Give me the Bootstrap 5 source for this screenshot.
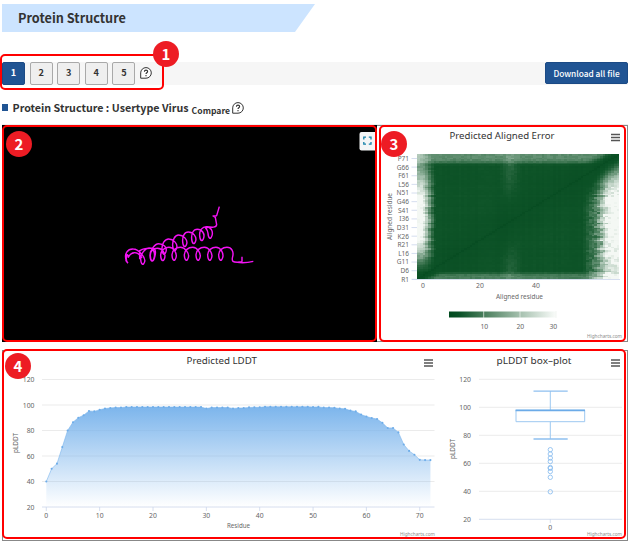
<!DOCTYPE html>
<html lang="en">
<head>
<meta charset="utf-8">
<title>Protein Structure</title>
<link href="https://cdn.jsdelivr.net/npm/bootstrap@5.3.0/dist/css/bootstrap.min.css" rel="stylesheet">
<style>
body{width:632px;height:543px;overflow:hidden;background:#fff;color:#333;font-family:"Noto Sans CJK KR","Noto Sans",sans-serif;line-height:1}
.page{width:632px;height:543px;padding:4px 4px 0 2px}
.ribbon{width:313px;height:28px;padding-left:16px;background:#cce4ff;clip-path:polygon(0 0,100% 0,293px 100%,0 100%);font-size:12.7px;font-weight:700}
.toolbar{height:23px;margin-top:29.5px;background:#f6f6f6}
.toolbar .btn{font-size:9.2px;font-weight:700;line-height:1;padding:0;border-radius:2px}
.num{width:23px;height:23px;background:#efefef;border:1px solid #a9a9a9;color:#333}
.num.active,.dl{background:#205493!important;border:1px solid #1b4a85!important;color:#fff!important}
.toolbar .dl{width:83px;height:22px;font-size:8.3px;font-weight:500}
.sub-title{height:18px;margin-top:15px;font-size:10.7px;font-weight:700}
.bullet{width:6px;height:7px;background:#205493;margin-right:4.5px;margin-bottom:3px}
.cmp{font-size:8.6px;margin:3px 2px 0 3px}
.sub-title svg{margin-bottom:2px}
.rule{height:1px;background:#eee;margin-top:6px}
.viewer{width:375px;height:217px;background:#000}
.panel{border:1px solid #888;background:#fff}
.pae{width:251px;height:217px;border-left:0}
.bottom{width:626px;height:191px;margin-top:8px}
svg{display:block}
.chart text{font-family:"Noto Sans",sans-serif;fill:#666;font-size:6.8px}
.chart .ttl{fill:#333;font-size:9.8px}
.chart .cr{fill:#8d8d8d;font-size:5.4px}
.frame{position:absolute;border:2px solid #f00;border-radius:5px}
.f1{left:0;top:54px;width:164px;height:36px}
.f2{left:2px;top:125px;width:375px;height:217px}
.f3{left:379px;top:125px;width:247px;height:217px}
.f4{left:2px;top:349px;width:624px;height:190px}
.dot{position:absolute;width:26px;height:26px;background:#ed1c24;color:#fff;font-size:15px;font-weight:700;padding-bottom:1px}
.d1{left:153px;top:41px}.d2{left:6px;top:131px}.d3{left:381px;top:131px}.d4{left:5px;top:353px}
</style>
<script src="https://cdn.jsdelivr.net/npm/bootstrap@5.3.0/dist/js/bootstrap.bundle.min.js"></script>
</head>
<body>
<main class="page position-relative">
  <div class="ribbon d-flex align-items-center">Protein Structure</div>
  <div class="toolbar d-flex align-items-center">
    <div class="d-flex align-items-center" style="gap:4.6px">
      <button class="btn num active">1</button><button class="btn num">2</button><button class="btn num">3</button><button class="btn num">4</button><button class="btn num">5</button>
      <svg width="12" height="12" viewBox="0 0 12 12"><path d="M.7 11.2V5.9A5.3 5.3 0 1 1 6 11.2Z" fill="#fff" stroke="#333"/><path d="M4.4 4.7C4.4 2.6 7.7 2.7 7.6 4.6C7.5 5.8 6 5.7 6 7.1M6 8.1V9.2" fill="none" stroke="#333" stroke-width="1.1"/></svg>
    </div>
    <button class="btn dl ms-auto">Download all file</button>
  </div>
  <div class="sub-title d-flex align-items-center"><span class="bullet"></span><span>Protein Structure : Usertype Virus</span><span class="cmp">Compare</span>
    <svg width="12" height="12" viewBox="0 0 12 12"><path d="M.7 11.2V5.9A5.3 5.3 0 1 1 6 11.2Z" fill="#fff" stroke="#333"/><path d="M4.4 4.7C4.4 2.6 7.7 2.7 7.6 4.6C7.5 5.8 6 5.7 6 7.1M6 8.1V9.2" fill="none" stroke="#333" stroke-width="1.1"/></svg>
  </div>
  <div class="rule"></div>
  <div class="d-flex">
    <div class="viewer">
      <svg width="375" height="217" viewBox="2 125 375 217">
        <path id="helix" transform="translate(120 200) scale(.3333)" fill="none" stroke="#f413f4" stroke-width="4.300" stroke-linejoin="round"/>
        <rect x="359.500" y="132" width="18" height="18.500" rx="2" fill="#f4f5f6"/>
        <path d="M363.800 139.400V137.200H366M368.800 137.200H371V139.400M371 142V144.200H368.800M366 144.200H363.800V142" fill="none" stroke="#1580a8" stroke-width="1.300"/>
      </svg>
    </div>
    <div class="panel pae">
      <svg class="chart" width="250" height="215" viewBox="377 126 250 215">
        <text class="ttl" x="449.500" y="139" textLength="105" lengthAdjust="spacingAndGlyphs">Predicted Aligned Error</text>
        <path d="M611 134.500h9M611 137.500h9M611 140.500h9" stroke="#555" stroke-width="1.600"/>
        <g id="paeAxis"></g><g id="heat" shape-rendering="crispEdges"></g>
        <text transform="translate(391.500 240) rotate(-90)" textLength="47" lengthAdjust="spacingAndGlyphs">Aligned residue</text>
        <text x="423" y="287.500" text-anchor="middle">0</text><text x="480" y="287.500" text-anchor="middle">20</text><text x="536" y="287.500" text-anchor="middle">40</text>
        <text x="496" y="298.500" textLength="47" lengthAdjust="spacingAndGlyphs">Aligned residue</text>
        <linearGradient id="lg"><stop offset="0" stop-color="#004a1e"/><stop offset=".1" stop-color="#0b5228"/><stop offset=".33" stop-color="#4b7f5d"/><stop offset=".66" stop-color="#a5c0ae"/><stop offset="1" stop-color="#fbfdfb"/></linearGradient>
        <rect x="449" y="311.500" width="107.500" height="6" fill="url(#lg)"/><path d="M483.700 311v7M520 311v7M556 311v7" stroke="#eef2ee" stroke-width=".7"/>
        <text x="484.300" y="328.500" text-anchor="middle">10</text><text x="520.300" y="328.500" text-anchor="middle">20</text><text x="553.300" y="328.500" text-anchor="middle">30</text>
        <text class="cr" x="587" y="338.300" textLength="35" lengthAdjust="spacingAndGlyphs">Highcharts.com</text>
      </svg>
    </div>
  </div>
  <div class="panel bottom">
    <svg class="chart" width="624" height="189" viewBox="3 351 624 189">
      <linearGradient id="ag" x1="0" y1="0" x2="0" y2="1"><stop offset="0" stop-color="#7cb5ec"/><stop offset="1" stop-color="#7cb5ec" stop-opacity="0"/></linearGradient>
      <g id="grid"></g><g id="area"></g>
      <text class="ttl" x="186.500" y="363.700" textLength="70.500" lengthAdjust="spacingAndGlyphs">Predicted LDDT</text>
      <text class="ttl" x="496.500" y="363.700" textLength="75" lengthAdjust="spacingAndGlyphs">pLDDT box–plot</text>
      <path d="M424 360h9M424 363h9M424 366h9M611 360h9M611 363h9M611 366h9" stroke="#555" stroke-width="1.600"/>
      <text transform="translate(17.500 453) rotate(-90)" textLength="20" lengthAdjust="spacingAndGlyphs">pLDDT</text>
      <text transform="translate(454.500 459) rotate(-90)" textLength="20" lengthAdjust="spacingAndGlyphs">pLDDT</text>
      <text x="227" y="528" textLength="23" lengthAdjust="spacingAndGlyphs">Residue</text>
      <text x="550.300" y="530" text-anchor="middle">0</text>
      <text class="cr" x="400" y="536" textLength="35" lengthAdjust="spacingAndGlyphs">Highcharts.com</text>
      <text class="cr" x="587" y="536" textLength="35" lengthAdjust="spacingAndGlyphs">Highcharts.com</text>
      <path d="M550.300 391V410M550.300 421.700V439M516 410.300V421.700H584.700V410.300Z" fill="none" stroke="#9dc8f1"/>
      <path d="M533.500 391.200H567.700M533.500 439H567.700" stroke="#8fc0ef" stroke-width="1.300"/><path d="M515.500 410.300H585" stroke="#6cabe8" stroke-width="1.700"/>
      <g id="outliers" fill="none" stroke="#8fc0ef" stroke-width=".9"></g>
    </svg>
  </div>
  <div class="frame f1"></div><div class="frame f2"></div><div class="frame f3"></div><div class="frame f4"></div>
  <div class="dot d1 rounded-circle d-flex align-items-center justify-content-center">1</div>
  <div class="dot d2 rounded-circle d-flex align-items-center justify-content-center">2</div>
  <div class="dot d3 rounded-circle d-flex align-items-center justify-content-center">3</div>
  <div class="dot d4 rounded-circle d-flex align-items-center justify-content-center">4</div>
</main>
<script>
const $=id=>document.getElementById(id);
// Helix ribbon: arches joined by narrow loops
const coil=(x,y,loops)=>{let s='';for(const [lx,ly,ax,ay] of loops){s+=`C${x+14},${y} ${lx+9},${ly-18} ${lx+5},${ly-5}S${lx-6},${ly+4} ${lx-7},${ly-12}S${ax-12},${ay} ${ax},${ay}`;x=ax;y=ay}return s};
let d='M20,186C10,160 24,146 40,147'+coil(40,147,[[69,190,88,144],[97,180,116,131],[133,160,146,117],[165,149,176,105],[195,137,205,96],[222,128,232,88],[246,119,259,80],[271,112,262,84]]);
d+='M259,80C275,82 289,84 290,74L286,52L279,48L290,47L298,20';
d+='M24,190C14,180 22,150 25,172C32,156 52,150 66,174M18,160V184M59,150V178M60,152Q70,144 96,145'+coil(96,145,[[98,180,112,145],[129,179,147,142],[163,178,181,142],[200,178,218,142],[235,178,253,142],[270,178,288,142],[303,178,321,142]])+'C335,142 342,155 338,170S340,187 352,187C360,185 365,188 366,184V170M352,187Q375,190 400,184';
$('helix').setAttribute('d',d);
// Aligned error matrix
let seed=7;const rnd=()=>(seed=(seed*16807)%2147483647)/2147483647;
const N=73,cl=(v,a,b)=>Math.max(a,Math.min(b,v)),sm=(a,b,x)=>{x=cl((x-a)/(b-a),0,1);return x*x*(3-2*x)};
const stops=[[0,0,68,27],[.1,14,84,40],[.33,75,127,93],[.66,165,192,174],[1,244,248,244]];
const col=t=>{for(let i=1;i<5;i++)if(t<=stops[i][0]){const a=stops[i-1],b=stops[i],f=(t-a[0])/(b[0]-a[0]);return'rgb('+[1,2,3].map(k=>Math.round(a[k]+(b[k]-a[k])*f))+')'}};
const rn=[...Array(N)].map(()=>rnd()-.5),cn=[...Array(N)].map(()=>rnd()-.5);
let h='';
for(let j=0;j<N;j++)for(let i=0;i<N;i++){
  const u=i/(N-1),w=j/(N-1),dist=Math.abs(u-w);
  let v=.08+.015*sm(.02,.3,dist)+.012*(rn[j]+cn[i]);
  const left=1-sm(.01,.09,u+rn[j]*.018), lh=sm(.02,.35,w)*(1-.6*sm(.6,.95,w));
  v+=left*lh*.95;
  const edge=.875+rn[j]*.035, right=sm(edge,edge+.09,u), rh=sm(.05,.38,u-w)*.3+sm(.02,.2,u-w)*.45;
  v+=right*rh*(.72+.28*sm(.02,.3,w));
  v+=sm(.82,.89,u)*sm(.06,.35,u-w)*.22*(.5+rnd());
  v+=sm(.91,.97,w)*sm(.02,.12,w-u)*.3*(1-left*.3);
  v+=(1-sm(.02,.055,w))*sm(.02,.1,u-w)*.23;
  v+=Math.exp(-(((u-.46)/.035)**2))*sm(.08,.5,dist)*.1*(.75+rnd()*.5);
  v+=(rnd()-.5)*.24*cl(v-.06,0,.5);
  v=cl(v*sm(-.04,.025,dist),.01,1);
  h+=`<rect x="${(417+i*202.3/N).toFixed(2)}" y="${(279-(j+1)*125/N).toFixed(2)}" width="2.9" height="1.85" fill="${col(v)}"/>`;
}
$('heat').innerHTML=h;
$('paeAxis').innerHTML='P71 G66 F61 L56 N51 G46 S41 I36 D31 K26 R21 L16 G11 D6 R1'.split(' ').map((t,i)=>{const y=158.5+i*8.63;return`<path d="M411.500 ${y}h6" stroke="#ccd6eb" stroke-width=".8"/><text x="409" y="${y+2.4}" text-anchor="end" style="font-size:6.5px">${t}</text>`}).join('')+'<path d="M412 279.500H620" stroke="#ccd6eb" stroke-width=".8"/>';
// Gridlines and axis labels
let g='';
for(let v=20;v<=120;v+=20){const a=507-(v-20)*1.275,b=519.3-(v-20)*1.4,c=v==20?'#ccd6eb':'#e6e6e6';
 g+=`<path d="M42 ${a}H434.500M479 ${b}H622" stroke="${c}" stroke-width=".8"/><text x="34.500" y="${a+2.5}" text-anchor="end">${v}</text><text x="471" y="${b+2.5}" text-anchor="end">${v}</text>`}
for(let x=0;x<=70;x+=10){const p=46.3+x*5.335;g+=`<path d="M${p} 507v4" stroke="#ccd6eb" stroke-width=".8"/><text x="${p}" y="517.500" text-anchor="middle">${x}</text>`}
$('grid').innerHTML=g+'<path d="M550.300 519v4" stroke="#ccd6eb" stroke-width=".8"/>';
const data=[40,50,54,67,80,86.5,90,92,95.3,95,96.3,97.2,97.7,98,98,...Array(15).fill(98.4),97.2,98,98,98,98,97.3,97.6,97.7,98.1,98.2,98.2,...Array(9).fill(98.6),98.4,98.5,98,98,97.8,97.3,97,95.6,95,92.5,91,89.8,89,86,82,82,78.5,69,64,61,57,56.8,56.8,56.8];
data.length=73;
const pts=data.map((v,i)=>[46.3+i*5.335,507-(v-20)*1.275]);
const line=pts.map(p=>p.map(n=>n.toFixed(2)).join()).join('L');
$('area').innerHTML=`<path d="M46.300 507L${line}V507Z" fill="url(#ag)"/><path d="M${line}" fill="none" stroke="#7cb5ec" stroke-width=".6"/>`+pts.map(p=>`<circle cx="${p[0]}" cy="${p[1]}" r="1.050" fill="#6eade9"/>`).join('');
$('outliers').innerHTML=[449.7,454,458,461.5,467.5,468.3,471.5,477.3,491.8].map(y=>`<circle cx="550.300" cy="${y}" r="2.200"/>`).join('');
</script>
</body>
</html>
